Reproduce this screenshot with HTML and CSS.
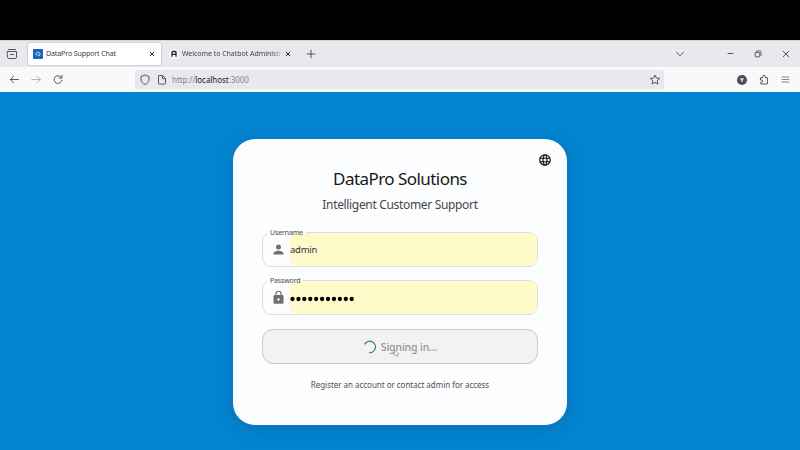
FILE: index.html
```html
<!DOCTYPE html>
<html lang="en">
<head>
<meta charset="utf-8">
<title>DataPro Support Chat</title>
<link rel="stylesheet" href="styles.css">
</head>
<body>
<div class="screen">
  <div class="letterbox"></div>
  <div class="tabs">
    <svg class="icon recent" viewBox="0 0 12 12"><path d="M2.500 1.500h7M1.500 3.500h9v5.700a1.300 1.300 0 0 1-1.300 1.300H2.800a1.300 1.300 0 0 1-1.300-1.300zM4.500 6.500h3"/></svg>
    <div class="tab active">
      <svg class="favicon" viewBox="0 0 10 10"><rect width="10" height="10" rx=".8" fill="#1763bd"/><path d="M3 6.200V5C3 3.900 3.800 3.200 5 3.200s2 .9 2 1.900c0 1-.7 1.700-1.500 1.700L4.800 5.400" fill="none" stroke="#fff" stroke-width=".8"/></svg>
      <span class="tab-title first">DataPro Support Chat</span>
      <svg class="close" viewBox="0 0 8 8"><path d="M1.800 1.800l4.400 4.400M6.200 1.800l-4.400 4.400"/></svg>
    </div>
    <div class="tab second">
      <svg class="favicon" viewBox="0 0 10 10"><circle cx="5" cy="5" r="4.800" fill="#fff"/><path d="M3 7.700V3.200Q3 2.500 3.700 2.500h2.600Q7 2.500 7 3.200v4.500M3 5.400h4" fill="none" stroke="#222" stroke-width="1.300"/></svg>
      <span class="tab-title faded">Welcome to Chatbot Administra</span>
      <svg class="close" viewBox="0 0 8 8"><path d="M1.800 1.800l4.400 4.400M6.200 1.800l-4.400 4.400"/></svg>
    </div>
    <svg class="icon plus" viewBox="0 0 12 12"><path d="M6 2.200v7.600M2.200 6h7.600"/></svg>
    <svg class="icon chevron" viewBox="0 0 12 12"><path d="M2.500 4.300L6 7.800l3.500-3.500"/></svg>
    <svg class="icon minimize" viewBox="0 0 12 12"><path d="M4 5.500h5"/></svg>
    <svg class="icon win" viewBox="0 0 12 12"><rect x="3.200" y="4.400" width="4.500" height="4.500" rx="1"/><path d="M4.700 3h3A1.300 1.300 0 0 1 9 4.300v3.200"/></svg>
    <svg class="icon win" viewBox="0 0 12 12"><path d="M3.200 3.200l5.600 5.600M8.800 3.200L3.200 8.800"/></svg>
  </div>
  <div class="nav">
    <svg class="icon" viewBox="0 0 12 12"><path d="M10.500 5.500H2.300M5.600 2.300L2.300 5.500l3.300 3.200"/></svg>
    <svg class="icon step dim" viewBox="0 0 12 12"><path d="M1.800 5.500h8.500M7 2.300l3.300 3.200L7 8.700"/></svg>
    <svg class="icon step" viewBox="0 0 12 12"><path d="M9.300 3.400A3.900 3.900 0 1 0 9.900 6.200M9.900 1.200v2.900H7"/></svg>
    <div class="url">
      <svg class="url-icon" viewBox="0 0 12 12"><path d="M6 1l4 1.500V5c0 2.600-1.500 4.500-4 5.500C3.500 9.500 2 7.600 2 5V2.500z"/></svg>
      <svg class="url-icon page-icon" viewBox="0 0 12 12"><path d="M2.500 1.500h4.100l2.900 3v4.700a.9.900 0 0 1-.9.900H3.400a.9.900 0 0 1-.9-.9zM6.400 1.700v3h3"/></svg>
      <span class="address">http://<b>localhost</b>:3000</span>
      <svg class="url-icon star" viewBox="0 0 12 12"><path d="M6 1l1.400 3 3.300.4-2.400 2.300.6 3.300L6 8.400 3.100 10l.6-3.300-2.400-2.300L4.600 4z"/></svg>
    </div>
    <div class="profile">Y</div>
    <svg class="icon extension" viewBox="0 0 12 12"><path d="M2.800 3.700h2V2.500a1.200 1.200 0 0 1 2.400 0v1.200h2.200v6.300H2.800V8.200h.9a1.100 1.100 0 0 0 0-2.200h-.9z"/></svg>
    <svg class="icon menu" viewBox="0 0 12 12"><path d="M2 3h7M2 5.500h7M2 8h7"/></svg>
  </div>
  <main class="page">
    <section class="card">
      <svg class="globe" viewBox="0 0 24 24"><path d="M11.990 2C6.470 2 2 6.480 2 12s4.470 10 9.990 10C17.520 22 22 17.520 22 12S17.520 2 11.990 2zm6.930 6h-2.950a15.650 15.650 0 0 0-1.380-3.560A8.030 8.030 0 0 1 18.920 8zM12 4.040c.83 1.200 1.480 2.530 1.910 3.960h-3.820c.43-1.430 1.080-2.760 1.910-3.960zM4.260 14a8.200 8.200 0 0 1 0-4h3.380a16.500 16.500 0 0 0 0 4H4.260zm.82 2h2.950c.32 1.250.78 2.450 1.380 3.560A7.990 7.990 0 0 1 5.080 16zm2.950-8H5.080a7.990 7.990 0 0 1 4.330-3.560A15.650 15.650 0 0 0 8.030 8zM12 19.960A13.900 13.900 0 0 1 10.090 16h3.820A13.900 13.900 0 0 1 12 19.960zM14.340 14H9.660a14.700 14.700 0 0 1 0-4h4.680a14.700 14.700 0 0 1 0 4zm.25 5.560c.6-1.110 1.060-2.310 1.380-3.560h2.950a8.030 8.030 0 0 1-4.330 3.560zM16.360 14a16.500 16.500 0 0 0 0-4h3.380a8.200 8.200 0 0 1 0 4h-3.380z"/></svg>
      <h1><span>DataPro Solutions</span></h1>
      <h2><span>Intelligent Customer Support</span></h2>
      <div class="field">
        <span class="label">Username</span>
        <div class="adornment"><svg viewBox="0 0 24 24"><path d="M12 12a4 4 0 1 0 0-8 4 4 0 0 0 0 8zm0 2c-2.670 0-8 1.340-8 4v2h16v-2c0-2.660-5.330-4-8-4z"/></svg></div>
        <div class="value"><span>admin</span></div>
      </div>
      <div class="field">
        <span class="label">Password</span>
        <div class="adornment"><svg viewBox="0 0 24 24"><path d="M18 8h-1V6A5 5 0 0 0 7 6v2H6a2 2 0 0 0-2 2v10c0 1.100.9 2 2 2h12a2 2 0 0 0 2-2V10a2 2 0 0 0-2-2zm-6 9a2 2 0 1 1 0-4 2 2 0 0 1 0 4zm3.100-9H8.900V6a3.100 3.100 0 0 1 6.200 0z"/></svg></div>
        <div class="value dots"><svg class="mask" viewBox="0 0 66 6"><path d="M2.500 3h.01M8.420 3h.01M14.340 3h.01M20.260 3h.01M26.180 3h.01M32.100 3h.01M38.020 3h.01M43.940 3h.01M49.860 3h.01M55.780 3h.01M61.700 3h.01"/></svg></div>
      </div>
      <div class="button">
        <svg class="spinner" viewBox="0 0 14 14"><path d="M1.700 4.400A5.700 5.700 0 1 1 6.200 12.600"/></svg>
        <span>Signing in...</span>
      </div>
      <p class="note"><span>Register an account or contact admin for access</span></p>
    </section>
  </main>
  <svg class="cursor" viewBox="0 0 6 9"><path d="M.6.700v6l1.500-1.300 1 2.300 1-.5-1-2.200h1.800z"/></svg>
</div>
</body>
</html>
```
FILE: styles.css
```css
* { box-sizing: border-box; }
body { margin: 0; font-family: "Noto Sans", "Open Sans", sans-serif; }
svg { display: block; flex: none; }
.screen { position: relative; width: 800px; height: 450px; overflow: hidden; display: flex; flex-direction: column; background: #0284d0; }
.letterbox { height: 40px; background: #000; flex: none; }

.tabs { height: 27px; flex: none; display: flex; align-items: center; background: #e9e9ed; padding: 0 8px 0 6px; border-top: 1px solid #d3d3d6; }
.icon { width: 12px; height: 12px; fill: none; stroke: #45454d; stroke-width: .9; stroke-linecap: round; stroke-linejoin: round; }
.tab { display: flex; align-items: center; height: 22px; }
.active { width: 133px; margin-left: 10px; padding: 0 5px; background: #fff; border-radius: 2px; box-shadow: 0 0 2px rgba(0,0,0,.35); }
.second { margin-left: 8px; }
.favicon { width: 10px; height: 10px; }
.tab-title { margin-left: 3px; font-size: 7px; line-height: 10px; color: #404047; white-space: nowrap; }
.tab-title.first { letter-spacing: -.1px; }
.tab-title.faded { width: 102px; letter-spacing: -.04px; -webkit-mask-image: linear-gradient(90deg, #000 88%, transparent); mask-image: linear-gradient(90deg, #000 88%, transparent); }
.close { width: 8px; height: 8px; fill: none; stroke: #2c2c30; stroke-width: 1; }
.active .close { margin-left: auto; }
.plus { margin-left: 13px; }
.chevron { margin-left: auto; }
.minimize { margin-left: 38px; }
.win { margin-left: 16px; }

.nav { height: 25px; flex: none; display: flex; align-items: center; background: #f9f9fb; padding: 0 8px; }
.step { margin-left: 10px; }
.dim { stroke: #aaaab0; }
.url { width: 529px; height: 19px; margin-left: 71px; padding: 0 3px 0 4px; display: flex; align-items: center; background: #e9e9ed; border-radius: 2px; }
.url-icon { width: 12px; height: 12px; fill: none; stroke: #45454d; stroke-width: .9; stroke-linejoin: round; }
.page-icon { margin-left: 5px; }
.address { margin-left: 4px; font-size: 8px; letter-spacing: -.06px; color: #85858c; }
.address b { font-weight: 400; color: #222228; }
.star { margin-left: auto; }
.profile { width: 10px; height: 10px; margin-left: 73px; border-radius: 50%; background: #4c4c57; color: #fff; font-size: 6px; font-weight: 700; line-height: 10px; text-align: center; }
.extension { margin-left: 11px; }
.menu { margin-left: 10px; stroke: #777780; }

.page { flex: 1; display: flex; justify-content: center; align-items: flex-start; padding-top: 47px; }
.card { position: relative; width: 334px; height: 286px; padding: 28px 29px 0; border-radius: 22px; background: #fcfdfe; box-shadow: 0 4px 14px rgba(35,75,140,.35); }
.globe { position: absolute; top: 14px; right: 15px; width: 14px; height: 14px; fill: #111; }
h1, h2, p { margin: 0; font-weight: 400; text-align: center; white-space: nowrap; }
h1 { font-size: 17px; line-height: 24px; letter-spacing: -.55px; color: #171717; }
h2 { margin-top: 3px; font-size: 12px; line-height: 21px; height: 20px; letter-spacing: -.33px; color: #45454a; }
.field { position: relative; display: flex; height: 35px; margin-top: 18px; border: 1px solid #dddde1; border-radius: 9px; }
.field + .field { margin-top: 13px; }
.label { position: absolute; left: 4px; top: -5px; padding: 0 3px; font-size: 7px; line-height: 9px; letter-spacing: -.15px; color: #4b4b50; background: linear-gradient(#fcfdfe, #fcfdfe) 0 0 / 23px 100% no-repeat, linear-gradient(#fcfdfe, #fcfdfe) 0 0 / 100% 60% no-repeat; z-index: 1; }
.adornment { width: 27px; display: flex; align-items: center; justify-content: flex-end; padding-right: 4px; }
.adornment svg { width: 15px; height: 15px; fill: #707070; }
.value { flex: 1; display: flex; align-items: center; background: #fefac9; border-radius: 8px; font-size: 9.500px; letter-spacing: -.25px; color: #30343c; }
.dots { padding-top: 2px; }
.mask { width: 66px; height: 6px; fill: none; stroke: #000; stroke-width: 4.300; stroke-linecap: round; }
.button { display: flex; align-items: center; justify-content: center; height: 35px; margin-top: 14px; border: 1px solid #c9c9cb; border-radius: 11px; background: #f2f2f3; color: #939396; font-size: 10.500px; font-weight: 500; letter-spacing: -.15px; }
.spinner { width: 14px; height: 14px; margin-right: 4px; fill: none; stroke: #33827f; stroke-width: 1.300; }
.note { margin-top: 14px; font-size: 8px; line-height: 14px; letter-spacing: -.03px; color: #505055; }
.cursor { position: absolute; left: 394px; top: 349px; width: 6px; height: 9px; fill: #fff; stroke: #8d8d90; stroke-width: .6; }
```
